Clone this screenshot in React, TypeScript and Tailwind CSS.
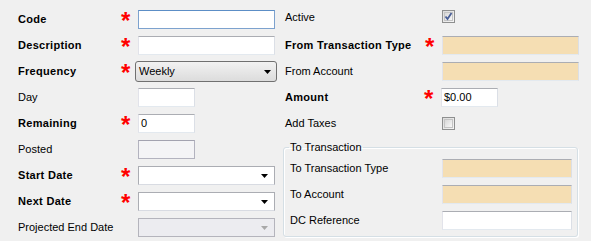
import type { ReactNode } from "react";

const FONT = "font-['Liberation_Sans',Arial,sans-serif]";

function Star() {
  return (
    <span className="w-[16px] h-[19px] shrink-0 relative">
      <span className="absolute -left-[1px] top-[1px] text-[#ff0000] text-[24px] font-bold leading-[19px]">*</span>
    </span>
  );
}

function TextBox({ w, value, tan, disabled, focused }: {
  w: number; value?: string; tan?: boolean; disabled?: boolean; focused?: boolean;
}) {
  const border = focused
    ? "border-[#7da2ce] border-t-[#5c8ec6]"
    : disabled
    ? "border-[#b3b3bf] border-t-[#a3a3b0]"
    : "border-t-[#abadb3] border-l-[#e2e3ea] border-r-[#dbdfe6] border-b-[#e3e9ef]";
  const bg = tan ? "bg-[#f5deb3]" : disabled ? "bg-[#f4f4f6]" : "bg-white";
  return (
    <div
      className={`h-[19px] border ${border} ${bg} text-[11px] leading-[17px] px-[2px] text-black`}
      style={{ width: w }}
    >
      {value}
    </div>
  );
}

function Arrow({ gray }: { gray?: boolean }) {
  return (
    <svg width="7" height="4" viewBox="0 0 7 4" className="shrink-0">
      <path d="M0 0h7L3.5 4z" fill={gray ? "#a8a8a8" : "#000"} />
    </svg>
  );
}

function DateBox({ disabled }: { disabled?: boolean }) {
  return (
    <div
      className={`w-[137px] h-[19px] border flex items-center justify-end pr-[6px] ${
        disabled ? "bg-[#ececf0] border-[#b4b4bc]" : "bg-white border-[#abadb3] border-b-[#d8dbe2]"
      }`}
    >
      <Arrow gray={disabled} />
    </div>
  );
}

function Combo({ value }: { value: string }) {
  return (
    <div className="-ml-[3px] w-[142px] h-[21px] -my-[1px] rounded-[3px] border border-[#707070] bg-gradient-to-b from-[#f2f2f2] to-[#dcdcdc] flex items-center pl-[3px] pr-[5px] text-[11px] text-black">
      <span className="flex-1">{value}</span>
      <Arrow />
    </div>
  );
}

function CheckBox({ checked }: { checked?: boolean }) {
  return (
    <div className="w-[13px] h-[13px] border border-[#8e8f8f] bg-gradient-to-br from-[#dcdcdc] to-[#f5f5f5] p-[1px]">
      <div className="w-full h-full border border-[#c4c4c4] bg-gradient-to-br from-[#d8d8d8] to-[#f8f8f8] relative">
        {checked && (
          <svg width="9" height="9" viewBox="0 0 9 9" className="absolute -left-[1px] -top-[1px]">
            <path d="M1.5 4.5 L3.5 7 L7.5 1" stroke="#4a5f97" strokeWidth="1.8" fill="none" />
          </svg>
        )}
      </div>
    </div>
  );
}

function LeftRow({ label, bold, req, children }: { label: string; bold?: boolean; req?: boolean; children: ReactNode }) {
  return (
    <div className="h-[19px] flex items-center">
      <span className={`w-[122px] pl-[18px] text-[11px] text-black whitespace-nowrap ${bold ? "font-bold tracking-[0.3px]" : ""}`}>
        {label}
      </span>
      {req ? <Star /> : <span className="w-[16px] shrink-0" />}
      {children}
    </div>
  );
}

function RightRow({ label, bold, req, lw, children }: { label: string; bold?: boolean; req?: boolean; lw: number; children: ReactNode }) {
  return (
    <div className="h-[19px] flex items-center">
      <span
        className={`text-[11px] text-black whitespace-nowrap shrink-0 ${bold ? "font-bold tracking-[0.3px]" : ""}`}
        style={{ width: lw }}
      >
        {label}
      </span>
      {req ? <Star /> : <span className="w-[16px] shrink-0" />}
      {children}
    </div>
  );
}

export default function App() {
  return (
    <div className={`w-[591px] h-[241px] bg-[#f0f0f0] flex overflow-hidden ${FONT}`}>
      <div className="w-[280px] shrink-0 pt-[10px] flex flex-col gap-[7px]">
        <LeftRow label="Code" bold req><TextBox w={137} focused /></LeftRow>
        <LeftRow label="Description" bold req><TextBox w={137} /></LeftRow>
        <LeftRow label="Frequency" bold req><Combo value="Weekly" /></LeftRow>
        <LeftRow label="Day"><TextBox w={57} /></LeftRow>
        <LeftRow label="Remaining" bold req><TextBox w={57} value="0" /></LeftRow>
        <LeftRow label="Posted"><TextBox w={57} disabled /></LeftRow>
        <LeftRow label="Start Date" bold req><DateBox /></LeftRow>
        <LeftRow label="Next Date" bold req><DateBox /></LeftRow>
        <LeftRow label="Projected End Date"><DateBox disabled /></LeftRow>
      </div>

      <div className="flex-1 pt-[10px] flex flex-col gap-[7px] pl-[5px]">
        <div className="h-[19px] flex items-start">
          <span className="w-[157px] text-[11px] text-black leading-[13px] mt-[1px]">Active</span>
          <CheckBox checked />
        </div>
        <RightRow label="From Transaction Type" bold req lw={141}><TextBox w={137} tan /></RightRow>
        <RightRow label="From Account" lw={141}><TextBox w={137} tan /></RightRow>
        <RightRow label="Amount" bold req lw={140}><TextBox w={57} value="$0.00" /></RightRow>
        <RightRow label="Add Taxes" lw={141}><CheckBox /></RightRow>

        <fieldset className="-ml-[2px] mt-[1px] w-[295px] border border-[#d5dfe5] rounded-[3px] shadow-[inset_1px_1px_0_#fff,1px_1px_0_#fff] pl-[6px] pb-[6px]">
          <legend className="-ml-[1px] px-[1px] text-[11px] leading-[13px] text-black">To Transaction</legend>
          <div className="pt-[5px] flex flex-col gap-[7px]">
            <div className="h-[19px] flex items-center">
              <span className="w-[152px] text-[11px] text-black">To Transaction Type</span>
              <TextBox w={130} tan />
            </div>
            <div className="h-[19px] flex items-center">
              <span className="w-[152px] text-[11px] text-black">To Account</span>
              <TextBox w={130} tan />
            </div>
            <div className="h-[19px] flex items-center">
              <span className="w-[152px] text-[11px] text-black">DC Reference</span>
              <TextBox w={130} />
            </div>
          </div>
        </fieldset>
      </div>
    </div>
  );
}
